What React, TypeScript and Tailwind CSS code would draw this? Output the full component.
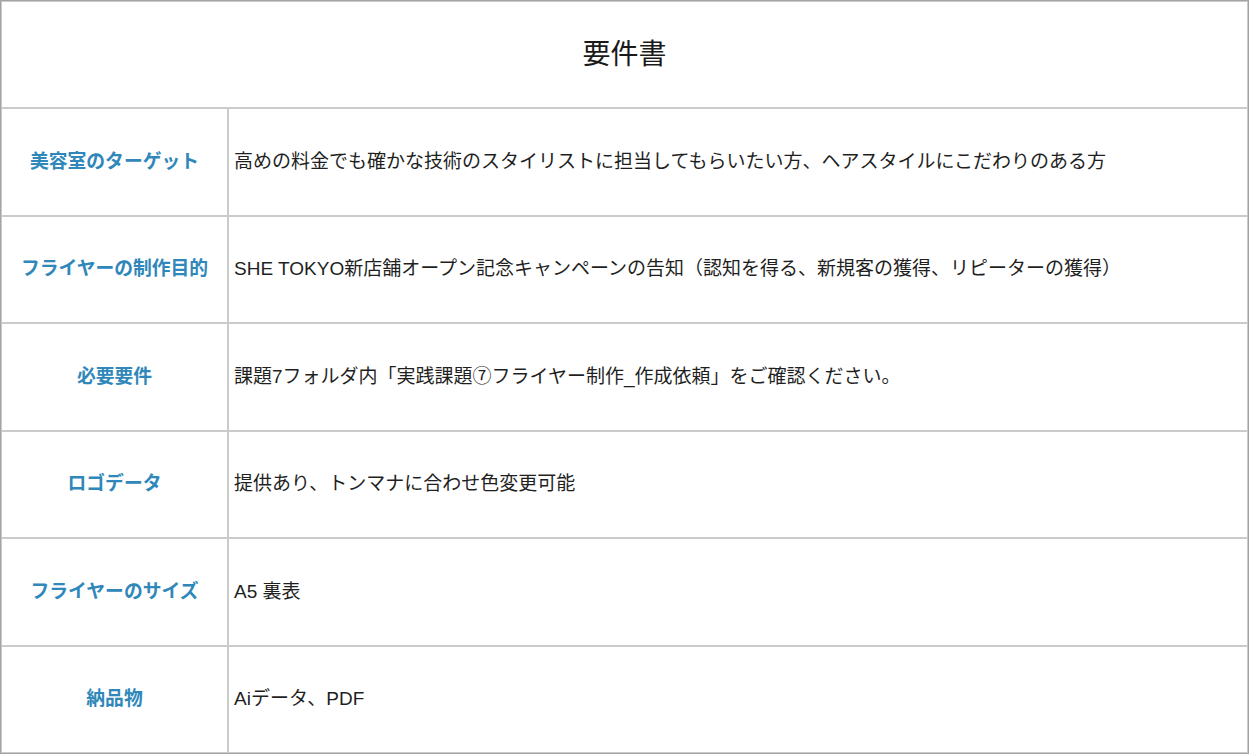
import React from "react";

const rows: [string, string][] = [
  ["美容室のターゲット", "高めの料金でも確かな技術のスタイリストに担当してもらいたい方、ヘアスタイルにこだわりのある方"],
  ["フライヤーの制作目的", "SHE TOKYO新店舗オープン記念キャンペーンの告知（認知を得る、新規客の獲得、リピーターの獲得）"],
  ["必要要件", "課題7フォルダ内「実践課題⑦フライヤー制作_作成依頼」をご確認ください。"],
  ["ロゴデータ", "提供あり、トンマナに合わせ色変更可能"],
  ["フライヤーのサイズ", "A5 裏表"],
  ["納品物", "Aiデータ、PDF"],
];

export default function App() {
  return (
    <div
      className="w-[1250px] h-[755px] bg-white"
      style={{ fontFamily: '"Liberation Sans", "Noto Sans CJK JP", sans-serif' }}
    >
      <div className="w-[1249px] h-[754px] border border-[#a3a3a3] flex flex-col">
        <div className="h-[107px] shrink-0 border border-[#cbcbcb] flex items-center justify-center text-[28px] text-[#1a1a1a]">
          要件書
        </div>
        {rows.map(([label, value]) => (
          <div key={label} className="flex-1 flex">
            <div className="w-[227px] shrink-0 border border-[#cbcbcb] flex items-center justify-center text-[18.8px] font-bold text-[#2f87ba]">
              {label}
            </div>
            <div className="flex-1 border border-[#cbcbcb] flex items-center pl-[5px] text-[19px] text-[#1f1f1f]">
              {value}
            </div>
          </div>
        ))}
      </div>
    </div>
  );
}
